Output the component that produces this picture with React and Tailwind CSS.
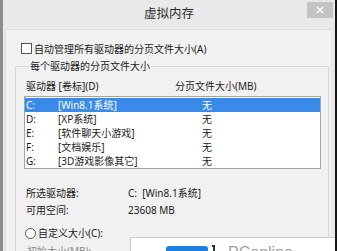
import React from "react";

const rows = [
  { d: "C:", l: "[Win8.1系统]", s: "无", sel: true },
  { d: "D:", l: "[XP系统]", s: "无" },
  { d: "E:", l: "[软件聊天小游戏]", s: "无" },
  { d: "F:", l: "[文档娱乐]", s: "无" },
  { d: "G:", l: "[3D游戏影像其它]", s: "无" },
];

export default function App() {
  return (
    <div
      className="relative w-[337px] h-[251px] overflow-hidden bg-[#e9e9e9] border-l-[3px] border-l-[#8d8d8d] border-r-2 border-r-[#151515] text-[#1b1b1b] text-[10px] leading-[14px]"
      style={{ fontFamily: '"Noto Sans", "Noto Sans CJK SC", sans-serif' }}
    >
      {/* title bar */}
      <div className="relative h-[29px] flex items-center justify-center">
        <span className="text-[12.5px] text-[#2a2a2a] -mt-[2px]">虚拟内存</span>
        <div className="absolute right-[2px] top-[2px] w-[26px] h-[16px] bg-[#c4c4c4] flex items-center justify-center">
          <svg width="8" height="8" viewBox="0 0 8 8">
            <path d="M1 1L7 7M7 1L1 7" stroke="#fff" strokeWidth="1.4" />
          </svg>
        </div>
      </div>

      {/* panel */}
      <div className="ml-[2px] mr-[4px] h-[230px] bg-[#f1f1f1] border-t border-l border-[#dcdcdc] pl-[15px] pt-[13px]">
        <div className="flex items-center h-[11px]">
          <div className="w-[11px] h-[11px] border border-[#555] bg-white" />
          <span className="ml-[2px]">自动管理所有驱动器的分页文件大小(A)</span>
        </div>

        <fieldset className="ml-[-6px] mt-[5px] w-[314px] border border-[#d8d8d8] pl-[8px] pr-[7px] pb-[40px]">
          <legend className="ml-[5px] px-[1px] h-[14px] leading-[14px]">每个驱动器的分页文件大小</legend>
          <div className="flex pt-[6px] h-[20px] pl-[2px]">
            <span className="w-[149px]">驱动器 [卷标](D)</span>
            <span>分页文件大小(MB)</span>
          </div>
          <div className="mt-[3px] w-[297px] h-[73px] bg-white border border-[#a3a3a3] pt-[1px]">
            {rows.map((r) => (
              <div
                key={r.d}
                className={
                  r.sel
                    ? "flex h-[14px] items-center bg-[#3a8aea] text-white"
                    : "flex h-[14px] items-center"
                }
              >
                <span className="w-[33px] pl-[1px]">{r.d}</span>
                <span className="w-[144px]">{r.l}</span>
                <span>{r.s}</span>
              </div>
            ))}
          </div>
          <div className="mt-[16px] flex h-[16px] items-center pl-[2px]">
            <span className="w-[102px]">所选驱动器:</span>
            <span>C:&nbsp;&nbsp;[Win8.1系统]</span>
          </div>
          <div className="mt-[1px] flex h-[16px] items-center pl-[2px]">
            <span className="w-[102px]">可用空间:</span>
            <span>23608 MB</span>
          </div>
          <div className="mt-[9px] flex h-[12px] items-center pl-[1px]">
            <div className="w-[11px] h-[11px] rounded-full border border-[#555] bg-white" />
            <span className="ml-[2px]">自定义大小(C):</span>
          </div>
          <div className="mt-[5px] flex h-[14px] items-center pl-[3px] text-[#8a8a8a]">
            <span>初始大小(MB):</span>
          </div>
        </fieldset>
      </div>

      {/* watermark band */}
      <div className="absolute left-[127px] top-[237px] right-0 bottom-0 bg-white/95 border-l border-t border-[#cfcfcf]">
        <div className="absolute left-[35px] top-[8px] w-[42px] h-[16px] rounded-[3px] bg-[#1c7fe2]" />
        <div className="absolute left-[81px] top-[7px] w-[3px] h-[7px] border-r-2 border-t-2 border-[#333]" />
        <span
          className="absolute left-[97px] top-[6px] text-[16px] leading-[18px] text-[#a0a0a0]"
          style={{ fontFamily: '"Liberation Sans", Arial, sans-serif' }}
        >
          PConline
        </span>
      </div>
    </div>
  );
}
